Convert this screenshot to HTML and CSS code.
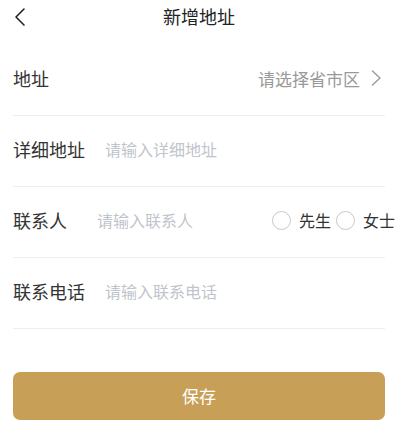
FILE: index.html
```html
<!DOCTYPE html>
<html lang="zh-CN">
<head>
<meta charset="utf-8">
<title>新增地址</title>
<link rel="stylesheet" href="styles.css">
</head>
<body>
<div class="page">
  <header class="nav">
    <svg class="back" width="14" height="20" viewBox="0 0 14 20"><path d="M11 2 L3 10 L11 18" fill="none" stroke="#222" stroke-width="1.6" stroke-linecap="round" stroke-linejoin="round"/></svg>
    <div class="title">新增地址</div>
  </header>
  <div class="form">
    <div class="row">
      <span class="label">地址</span>
      <span class="spacer"></span>
      <span class="value">请选择省市区</span>
      <svg class="chev" width="12" height="18" viewBox="0 0 12 18"><path d="M2.5 2 L10 9 L2.5 16" fill="none" stroke="#999" stroke-width="1.4" stroke-linecap="round" stroke-linejoin="round"/></svg>
    </div>
    <div class="row">
      <span class="label">详细地址</span>
      <span class="ph ph-gap20">请输入详细地址</span>
    </div>
    <div class="row">
      <span class="label">联系人</span>
      <span class="ph ph-gap30">请输入联系人</span>
      <span class="spacer"></span>
      <div class="radios">
        <span class="radio"></span><span class="rlabel">先生</span>
        <span class="radio"></span><span class="rlabel">女士</span>
      </div>
    </div>
    <div class="row">
      <span class="label">联系电话</span>
      <span class="ph ph-gap20">请输入联系电话</span>
    </div>
  </div>
  <button class="save">保存</button>
</div>
</body>
</html>
```
FILE: styles.css
```css
* { box-sizing: border-box; }
html, body { margin: 0; padding: 0; background: #fff; }
body {
  font-family: "Noto Sans CJK SC", "Noto Sans", sans-serif;
  color: #333;
  width: 400px;
  height: 426px;
  overflow: hidden;
}
.page { padding: 0 15px 0 13px; }
.nav {
  position: relative;
  height: 32px;
  margin-bottom: 13px;
  display: flex;
  align-items: center;
  justify-content: center;
}
.back { position: absolute; left: 0; top: 7px; }
.title { font-size: 18px; line-height: 32px; color: #222; }
.form { display: flex; flex-direction: column; }
.row {
  height: 71px;
  border-bottom: 1px solid #eeeeee;
  display: flex;
  align-items: center;
  padding-bottom: 4px;
}
.label { font-size: 18px; color: #333; line-height: 1; white-space: nowrap; }
.spacer { flex: 1; }
.value { font-size: 17px; color: #999; line-height: 1; white-space: nowrap; }
.chev { margin-left: 10px; margin-right: 3px; }
.ph { font-size: 16px; color: #c0c4cc; line-height: 1; white-space: nowrap; }
.ph-gap20 { margin-left: 20px; }
.ph-gap30 { margin-left: 30px; }
.radios {
  display: flex;
  align-items: center;
  margin-right: -10px;
}
.radio {
  width: 19px; height: 19px;
  border: 1px solid #c8c8c8;
  border-radius: 50%;
  margin-right: 8px;
}
.rlabel { font-size: 16px; color: #333; line-height: 1; margin-right: 5px; }
.rlabel:last-child { margin-right: 0; }
.save {
  display: block;
  width: 372px;
  height: 48px;
  margin-top: 43px;
  border: none;
  border-radius: 7px;
  background: #c89f57;
  color: #fff;
  font-family: "Noto Sans CJK SC", "Noto Sans", sans-serif;
  font-size: 17px;
  padding: 0 0 2px 0;
}
```
